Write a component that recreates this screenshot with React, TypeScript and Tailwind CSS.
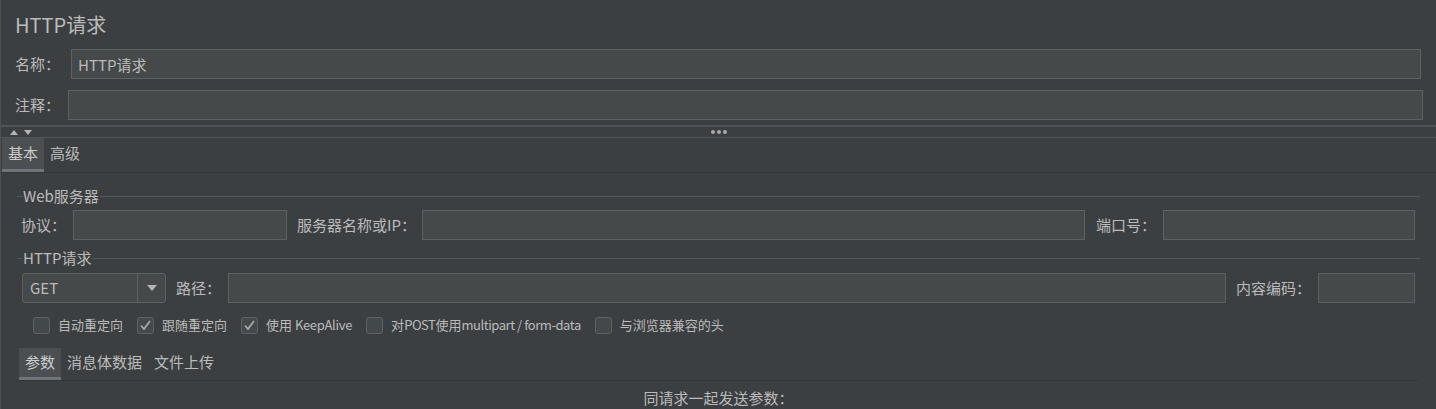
import type { ReactNode } from 'react'

const font = { fontFamily: '"Noto Sans CJK SC", "Noto Sans", sans-serif' }

function Field({ className = '', value = '' }: { className?: string; value?: string }) {
  return (
    <input
      readOnly
      value={value}
      className={`h-[30px] border border-[#5e6163] bg-[#45494a] px-[6px] text-[15px] text-[#bbbbbb] outline-none ${className}`}
    />
  )
}

function Label({ children, className = '' }: { children: ReactNode; className?: string }) {
  return <div className={`shrink-0 whitespace-nowrap text-[15px] leading-[30px] ${className}`}>{children}</div>
}

function GroupTitle({ title }: { title: string }) {
  return (
    <div className="ml-[16px] mr-[16px] flex h-[16px] items-center">
      <div className="h-px w-[5px] bg-[#55585a]" />
      <div className="px-[1px] text-[15px] leading-[16px]">{title}</div>
      <div className="h-px flex-1 bg-[#55585a]" />
    </div>
  )
}

function Check({ children, checked }: { children: ReactNode; checked?: boolean }) {
  return (
    <div className="flex items-center gap-[8px]">
      <div className="flex h-[17px] w-[17px] items-center justify-center rounded-[3px] border border-[#5f6264] bg-[#43494a]">
        {checked && (
          <svg width="13" height="13" viewBox="0 0 13 13">
            <polyline points="2,6.5 5,10 11,2" fill="none" stroke="#a7a7a7" strokeWidth="1.8" />
          </svg>
        )}
      </div>
      <span className="whitespace-nowrap text-[13px] leading-[18px]">{children}</span>
    </div>
  )
}

function Tab({ label, active }: { label: string; active?: boolean }) {
  return (
    <div className="flex h-full flex-col">
      <div className={`flex flex-1 items-center px-[6px] text-[15px] ${active ? 'bg-[#4b4f52] text-[#cccccc]' : ''}`}>
        {label}
      </div>
      <div className={`h-[3px] ${active ? 'bg-[#6f737a]' : ''}`} />
    </div>
  )
}

export default function App() {
  return (
    <div
      style={font}
      className="h-[409px] w-[1436px] overflow-hidden border-l border-[#4e5153] bg-[#3c3f41] text-[#bbbbbb]"
    >
      <div className="flex h-[49px] items-center pl-[14px] text-[20px]">HTTP请求</div>

      <div className="flex h-[30px] items-center pr-[15px]">
        <Label className="w-[70px] pl-[14px]">名称：</Label>
        <Field className="flex-1" value="HTTP请求" />
      </div>

      <div className="mt-[11px] flex h-[30px] items-center pr-[13px]">
        <Label className="w-[67px] pl-[14px]">注释：</Label>
        <Field className="flex-1" />
      </div>

      {/* splitter */}
      <div className="mt-[5px] h-[2px] bg-[#515456]" />
      <div className="grid h-[10px] grid-cols-[1fr_auto_1fr] items-center">
        <div className="flex items-center gap-[6px] pl-[9px]">
          <svg width="8" height="5" viewBox="0 0 8 5">
            <polygon points="0,5 4,0 8,5" fill="#b4b4b4" />
          </svg>
          <svg width="8" height="5" viewBox="0 0 8 5">
            <polygon points="0,0 8,0 4,5" fill="#b4b4b4" />
          </svg>
        </div>
        <div className="flex gap-[2px]">
          <div className="h-[4px] w-[4px] rounded-full bg-[#a9a9a9]" />
          <div className="h-[4px] w-[4px] rounded-full bg-[#a9a9a9]" />
          <div className="h-[4px] w-[4px] rounded-full bg-[#a9a9a9]" />
        </div>
        <div />
      </div>
      <div className="h-px bg-[#515456]" />

      <div className="flex h-[35px] border-b border-[#333638] pl-[1px]">
        <Tab label="基本" active />
        <Tab label="高级" />
      </div>

      <div className="mt-[15px]">
        <GroupTitle title="Web服务器" />
      </div>
      <div className="mt-[6px] flex h-[30px] items-center pl-[20px] pr-[21px]">
        <Label className="w-[52px]">协议：</Label>
        <Field className="w-[214px]" />
        <Label className="ml-[10px] w-[125px]">服务器名称或IP：</Label>
        <Field className="min-w-0 flex-1" />
        <Label className="ml-[11px] w-[67px]">端口号：</Label>
        <Field className="w-[252px]" />
      </div>

      <div className="mt-[10px]">
        <GroupTitle title="HTTP请求" />
      </div>
      <div className="mt-[7px] flex h-[30px] items-center pl-[21px] pr-[21px]">
        <div className="flex h-[30px] w-[144px] items-stretch rounded-[3px] border border-[#5e6163] bg-[#45494a]">
          <div className="flex flex-1 items-center pl-[7px] text-[15px]">GET</div>
          <div className="flex w-[28px] items-center justify-center border-l border-[#5e6163]">
            <svg width="10" height="6" viewBox="0 0 10 6">
              <polygon points="0,0 10,0 5,6" fill="#b4b4b4" />
            </svg>
          </div>
        </div>
        <Label className="ml-[10px] w-[52px]">路径：</Label>
        <Field className="min-w-0 flex-1" />
        <Label className="ml-[10px] w-[82px]">内容编码：</Label>
        <Field className="w-[97px]" />
      </div>

      <div className="mt-[13px] flex h-[18px] items-center gap-[14px] pl-[32px]">
        <Check>自动重定向</Check>
        <Check checked>跟随重定向</Check>
        <Check checked>
          使用 <span className="tracking-[-0.3px]">KeepAlive</span>
        </Check>
        <Check>
          对<span className="tracking-[-0.45px]">POST</span>使用
          <span className="tracking-[-0.45px]">multipart / form-data</span>
        </Check>
        <Check>与浏览器兼容的头</Check>
      </div>

      <div className="mx-[18px] mt-[14px] flex h-[33px] border-b border-[#333638]">
        <Tab label="参数" active />
        <Tab label="消息体数据" />
        <Tab label="文件上传" />
      </div>

      <div className="mt-[7px] text-center text-[15px] leading-[20px]">同请求一起发送参数：</div>
    </div>
  )
}
